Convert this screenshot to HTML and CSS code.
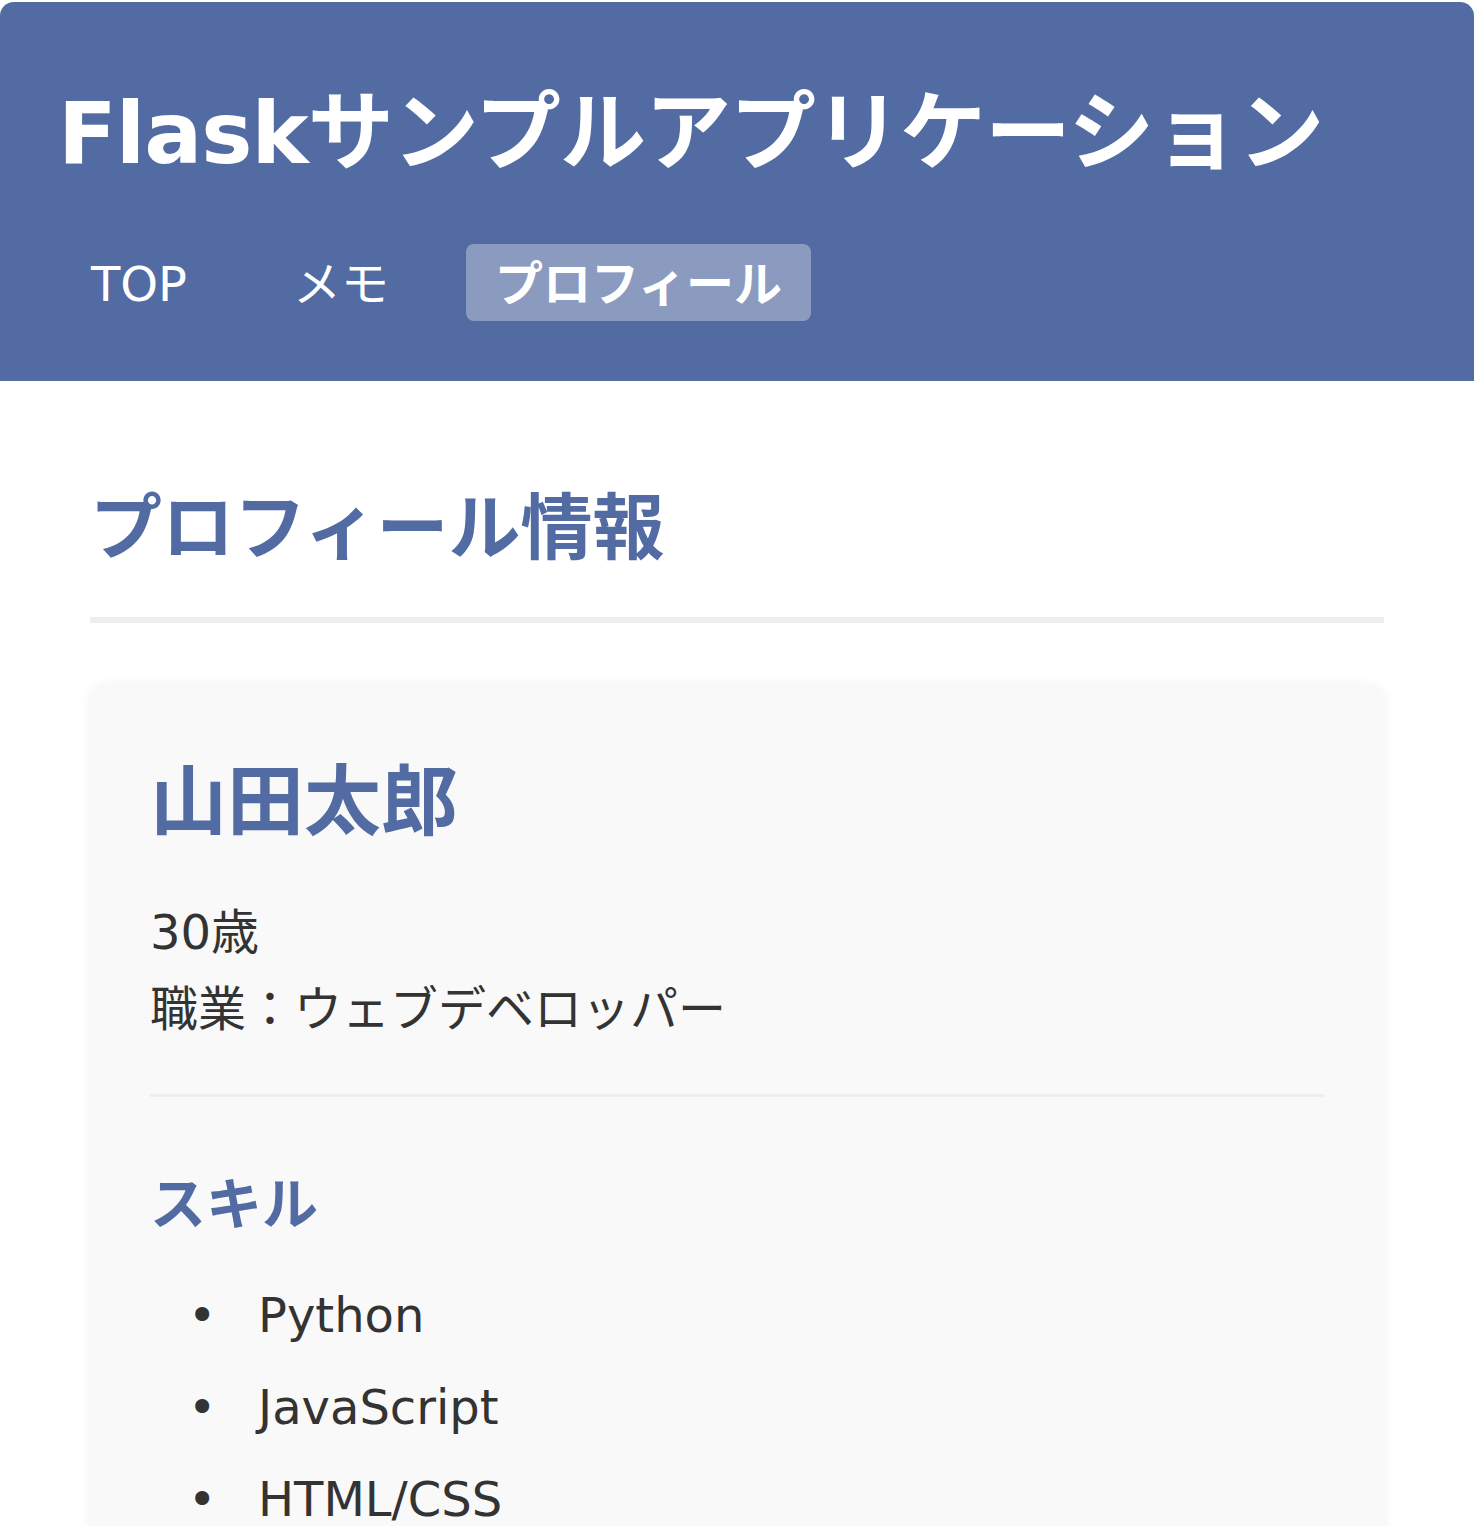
FILE: index.html
```html
<!DOCTYPE html>
<html lang="ja">
<head>
<meta charset="utf-8">
<title>Flaskサンプルアプリケーション</title>
<link rel="stylesheet" href="styles.css">
</head>
<body>
<header class="site-header">
  <h1 class="site-title">Flaskサンプルアプリケーション</h1>
  <nav class="site-nav">
    <a class="nav-link" href="#">TOP</a>
    <a class="nav-link" href="#">メモ</a>
    <a class="nav-link is-active" href="#">プロフィール</a>
  </nav>
</header>
<main class="content">
  <h2 class="page-title">プロフィール情報</h2>
  <section class="profile-card">
    <h3 class="profile-name">山田太郎</h3>
    <p class="profile-info">30歳<br>職業：ウェブデベロッパー</p>
    <hr class="card-divider">
    <h4 class="skills-title">スキル</h4>
    <ul class="skills-list">
      <li>Python</li>
      <li>JavaScript</li>
      <li>HTML/CSS</li>
    </ul>
  </section>
</main>
</body>
</html>
```
FILE: styles.css
```css
* {
  box-sizing: border-box;
}

html, body {
  margin: 0;
  padding: 0;
  background: #ffffff;
}

body {
  padding-top: 2px;
  font-family: "DejaVu Sans", "Noto Sans CJK JP", sans-serif;
  color: #333333;
}

.site-header {
  background: #526ba2;
  border-radius: 14px 14px 0 0;
  padding: 80px 62px 60px 58px;
  color: #ffffff;
}

.site-title {
  margin: 0 0 59px 0;
  font-size: 86px;
  line-height: 103px;
  font-weight: 700;
  letter-spacing: -1px;
}

.site-nav {
  display: flex;
  gap: 48px;
  margin-left: 4px;
}

.nav-link {
  display: block;
  padding: 12px 29px 8px;
  font-size: 48px;
  line-height: 57px;
  color: #ffffff;
  text-decoration: none;
  border-radius: 8px;
}

.nav-link.is-active {
  background: rgba(255, 255, 255, 0.33);
  font-weight: 700;
}

.content {
  padding: 104px 90px 0;
}

.page-title {
  margin: 0 0 60px;
  padding-bottom: 46px;
  border-bottom: 6px solid #eeeeee;
  font-size: 72px;
  line-height: 86px;
  font-weight: 700;
  color: #526ba2;
}

.profile-card {
  background: #f9f9f9;
  border-radius: 16px;
  box-shadow: 0 2px 12px rgba(0, 0, 0, 0.06);
  padding: 73px 60px 60px;
}

.profile-name {
  margin: 0 0 44px;
  font-size: 77px;
  line-height: 94px;
  font-weight: 700;
  color: #526ba2;
}

.profile-info {
  margin: 0 0 46px;
  font-size: 48px;
  line-height: 77px;
}

.card-divider {
  margin: 0 0 74px;
  border: 0;
  height: 3px;
  background: #eeeeee;
}

.skills-title {
  margin: 0 0 39px;
  font-size: 56px;
  line-height: 67px;
  font-weight: 700;
  color: #526ba2;
}

.skills-list {
  margin: 0;
  padding-left: 108px;
  list-style: none;
  font-size: 48px;
  line-height: 77px;
}

.skills-list li {
  margin-bottom: 15px;
}

.skills-list li::before {
  content: "•";
  display: inline-block;
  width: 70px;
  margin-left: -70px;
}
```
